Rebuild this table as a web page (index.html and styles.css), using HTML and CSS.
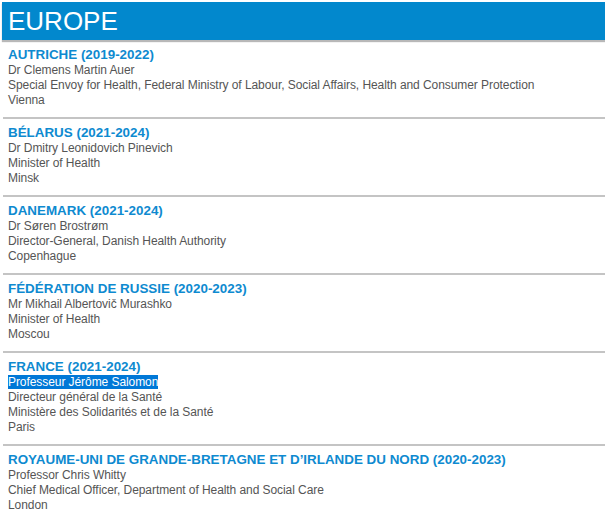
FILE: index.html
```html
<!DOCTYPE html>
<html lang="fr">
<head>
<meta charset="utf-8">
<title>Europe</title>
<link rel="stylesheet" href="styles.css">
</head>
<body>
<div class="page">
  <h1 class="region">EUROPE</h1>
  <div class="entry">
    <h2 class="country">AUTRICHE (2019-2022)</h2>
    <p class="line">Dr Clemens Martin Auer</p>
    <p class="line">Special Envoy for Health, Federal Ministry of Labour, Social Affairs, Health and Consumer Protection</p>
    <p class="line">Vienna</p>
  </div>
  <div class="entry">
    <h2 class="country">BÉLARUS (2021-2024)</h2>
    <p class="line">Dr Dmitry Leonidovich Pinevich</p>
    <p class="line">Minister of Health</p>
    <p class="line">Minsk</p>
  </div>
  <div class="entry">
    <h2 class="country">DANEMARK (2021-2024)</h2>
    <p class="line">Dr Søren Brostrøm</p>
    <p class="line">Director-General, Danish Health Authority</p>
    <p class="line">Copenhague</p>
  </div>
  <div class="entry">
    <h2 class="country">FÉDÉRATION DE RUSSIE (2020-2023)</h2>
    <p class="line">Mr Mikhail Albertovič Murashko</p>
    <p class="line">Minister of Health</p>
    <p class="line">Moscou</p>
  </div>
  <div class="entry">
    <h2 class="country">FRANCE (2021-2024)</h2>
    <p class="line"><span class="selected">Professeur Jérôme Salomon</span></p>
    <p class="line">Directeur général de la Santé</p>
    <p class="line">Ministère des Solidarités et de la Santé</p>
    <p class="line">Paris</p>
  </div>
  <div class="entry">
    <h2 class="country">ROYAUME-UNI DE GRANDE-BRETAGNE ET D’IRLANDE DU NORD (2020-2023)</h2>
    <p class="line">Professor Chris Whitty</p>
    <p class="line">Chief Medical Officer, Department of Health and Social Care</p>
    <p class="line">London</p>
  </div>
</div>
</body>
</html>
```
FILE: styles.css
```css
html, body {
  margin: 0;
  padding: 0;
  background: #ffffff;
}
body {
  font-family: "Liberation Sans", Arial, sans-serif;
}
.page {
  padding: 2px 0 0 2px;
}
.region {
  margin: 0;
  height: 38px;
  background: #0288cd;
  color: #ffffff;
  font-weight: normal;
  font-size: 26px;
  line-height: 39px;
  padding-left: 6px;
  box-shadow: 0 2px 1px #b8b8b8;
}
.entry {
  padding: 5px 0 9px 5px;
  margin-left: 1px;
  border-top: 2px solid #c4c4c4;
}
.region + .entry {
  border-top: none;
  padding-top: 6px;
}
.country {
  margin: 0;
  font-size: 13.4px;
  line-height: 17px;
  font-weight: bold;
  color: #0e8ad0;
}
.line {
  margin: 0;
  font-size: 12px;
  line-height: 15px;
  letter-spacing: -0.07px;
  color: #555555;
}
.selected {
  background: #0078d7;
  color: #ffffff;
}
```
